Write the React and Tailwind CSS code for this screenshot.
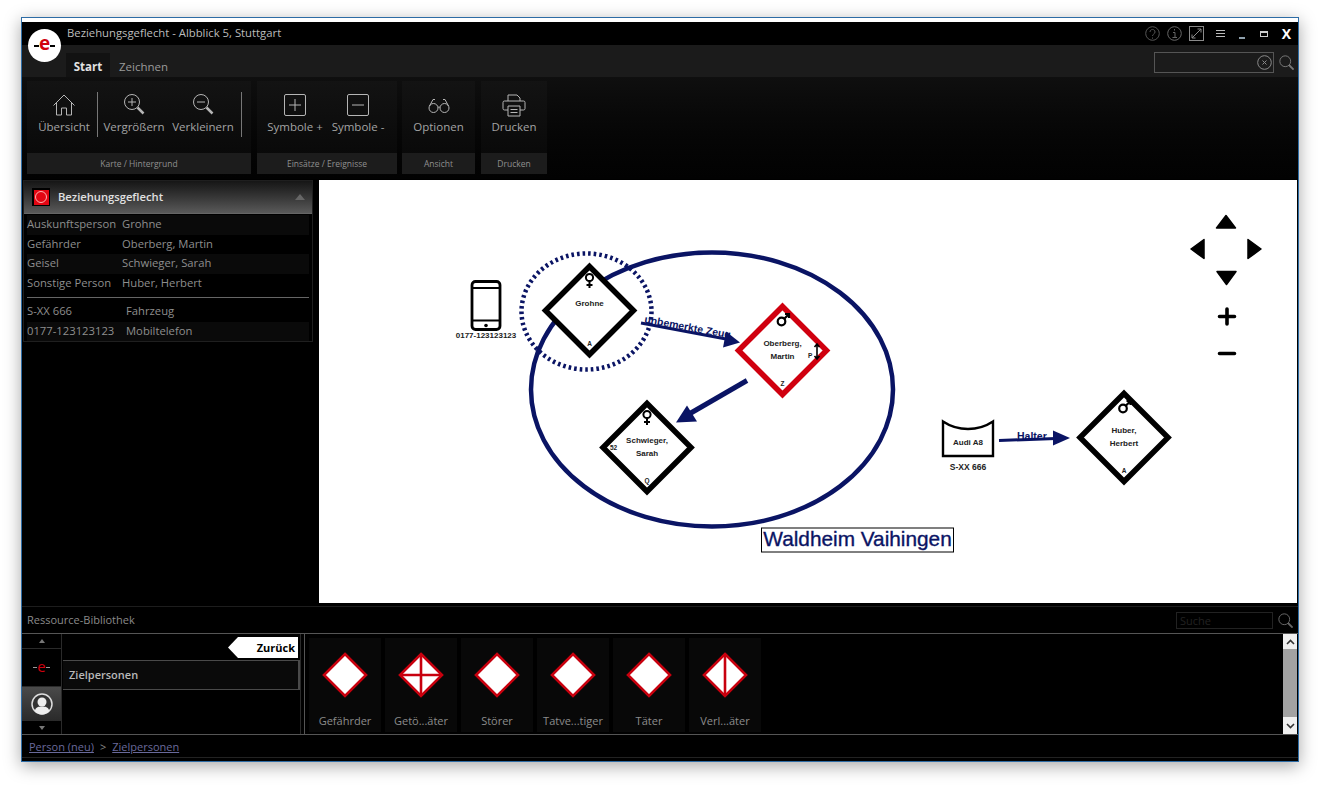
import React from 'react';

const NAVY = '#0a1464';

const treeRows = [
  ['Auskunftsperson', 'Grohne'],
  ['Gefährder', 'Oberberg, Martin'],
  ['Geisel', 'Schwieger, Sarah'],
  ['Sonstige Person', 'Huber, Herbert'],
];

const libraryItems = [
  { label: 'Gefährder', mark: null },
  { label: 'Getö...äter', mark: 'cross' },
  { label: 'Störer', mark: null },
  { label: 'Tatve...tiger', mark: null },
  { label: 'Täter', mark: null },
  { label: 'Verl...äter', mark: 'line' },
];

function Magnifier({ size = 18, color = '#777' }) {
  return (
    <svg width={size} height={size} viewBox="0 0 18 18" fill="none" stroke={color}>
      <circle cx="7.5" cy="7.5" r="6.5" strokeWidth="1.2" />
      <path d="M12 12l5.5 5.5" strokeWidth="2.2" />
    </svg>
  );
}

function RibbonIcon({ type }) {
  const c = '#b5b5b5';
  if (type === 'home') {
    return (
      <svg width="24" height="24" viewBox="0 0 24 24" fill="none" stroke={c} strokeWidth="1">
        <path d="M1.5 12.5L12 2l10.5 10.5M4.5 10v12h5v-7h5v7h5V10" />
      </svg>
    );
  }
  if (type === 'in' || type === 'out') {
    return (
      <svg width="24" height="24" viewBox="0 0 24 24" fill="none" stroke={c} strokeWidth="1">
        <circle cx="10" cy="9" r="7.5" />
        <path d="M6 9h8" />
        {type === 'in' && <path d="M10 5v8" />}
        <path d="M15.5 14.5l6 6" strokeWidth="2.5" />
      </svg>
    );
  }
  if (type === 'plus' || type === 'minus') {
    return (
      <svg width="24" height="24" viewBox="0 0 24 24" fill="none" stroke={c} strokeWidth="1">
        <rect x="1.5" y="1.5" width="21" height="21" rx="1.5" />
        <path d="M6 12h12" />
        {type === 'plus' && <path d="M12 6v12" />}
      </svg>
    );
  }
  if (type === 'glasses') {
    return (
      <svg width="24" height="24" viewBox="0 0 24 24" fill="none" stroke={c} strokeWidth="1">
        <circle cx="6.5" cy="15" r="4.5" />
        <circle cx="17.5" cy="15" r="4.5" />
        <path d="M11 14.5c.7-.6 1.3-.6 2 0M2.5 13L6 6.5h2M21.5 13L18 6.5h-2" />
      </svg>
    );
  }
  return (
    <svg width="24" height="24" viewBox="0 0 24 24" fill="none" stroke={c} strokeWidth="1">
      <path d="M6 8V2h9l3 3v3" />
      <path d="M6 17H2.5A1.5 1.5 0 011 15.5v-6A1.5 1.5 0 012.5 8h19A1.5 1.5 0 0123 9.5v6a1.5 1.5 0 01-1.5 1.5H18" />
      <path d="M6 13h12v10H6zM8.5 16.5h7M8.5 19.5h7" />
    </svg>
  );
}

function RibbonButton({ icon, label, width, className = '' }) {
  return (
    <div className={`flex flex-col items-center pt-[12px] ${className}`} style={{ width }}>
      <div className="h-[24px] flex items-center justify-center">
        <RibbonIcon type={icon} />
      </div>
      <div className="mt-[2px] text-[11.5px] leading-[16px] text-[#a4a4a4] whitespace-nowrap">{label}</div>
    </div>
  );
}

function RibbonGroup({ title, width, className = '', children }) {
  return (
    <div className={`h-[93px] flex flex-col bg-gradient-to-b from-[#131313] to-[#070707] ${className}`} style={{ width }}>
      <div className="flex-1 flex">{children}</div>
      <div className="h-[21px] bg-[#1c1c1c] text-[8.5px] leading-[21px] text-center text-[#8f8f8f]">{title}</div>
    </div>
  );
}

function Diamond({ x, y, color = '#000', lines, bottom, gender }) {
  const r = 44;
  return (
    <g>
      <path d={`M${x} ${y - r}L${x + r} ${y}L${x} ${y + r}L${x - r} ${y}Z`} fill="#fff" stroke={color} strokeWidth="5.5" />
      {gender === 'f' && (
        <g transform={`translate(${x} ${y - 33})`} fill="none" stroke="#000" strokeWidth="2">
          <circle cx="0" cy="0" r="3.6" />
          <path d="M0 3.5v7M-3 7.5h6" />
        </g>
      )}
      {gender === 'm' && (
        <g transform={`translate(${x - 1} ${y - 29})`} fill="none" stroke="#000" strokeWidth="2.2">
          <circle cx="0" cy="0" r="3.8" />
          <path d="M2.5 -2.5l4.5 -4.5M3.5 -7.5h4v4" />
        </g>
      )}
      {lines.map((line, i) => (
        <text
          key={line}
          x={x}
          y={y - 5 + i * 13}
          textAnchor="middle"
          fontSize="8"
          fontWeight="700"
          fontFamily="Liberation Sans, sans-serif"
          fill="#222"
        >
          {line}
        </text>
      ))}
      <text x={x} y={y + 35} textAnchor="middle" fontSize="6.5" fontWeight="700" fontFamily="Liberation Sans, sans-serif" fill="#222">
        {bottom}
      </text>
    </g>
  );
}

function Diagram() {
  const font = 'Liberation Sans, sans-serif';
  return (
    <svg className="block w-full h-full" viewBox="319 180 978 422">
      <ellipse cx="712" cy="389" rx="181" ry="137" fill="none" stroke={NAVY} strokeWidth="4.5" />

      {/* Telefon */}
      <rect x="472" y="281" width="28" height="48" rx="3.5" fill="#fff" stroke="#000" strokeWidth="2.8" />
      <path d="M472 287.5h28M472 320h28" stroke="#000" strokeWidth="1.8" />
      <circle cx="486" cy="325" r="1.8" fill="#000" />
      <text x="486" y="337" textAnchor="middle" fontSize="8" fontWeight="700" fontFamily={font} fill="#222">
        0177-123123123
      </text>

      <Diamond x={589.5} y={310} lines={['Grohne']} bottom="A" gender="f" />
      <ellipse cx="586.5" cy="311" rx="65" ry="58" fill="none" stroke={NAVY} strokeWidth="4.5" strokeDasharray="2.6 3" />
      <Diamond x={782.5} y={350} color="#d0000f" lines={['Oberberg,', 'Martin']} bottom="Z" gender="m" />
      <Diamond x={647} y={447} lines={['Schwieger,', 'Sarah']} bottom="Q" gender="f" />
      <Diamond x={1124} y={437} lines={['Huber,', 'Herbert']} bottom="A" gender="m" />

      {/* kleine Marker in den Rauten */}
      <text x="808" y="357" fontSize="6.5" fontWeight="700" fontFamily={font} fill="#222">P</text>
      <path d="M817 344v14M814.5 346.5l2.5-3 2.5 3M814.5 355.5l2.5 3 2.5-3" fill="none" stroke="#000" strokeWidth="1.6" />
      <text x="613.5" y="449" textAnchor="middle" fontSize="6.5" fontWeight="700" fontFamily={font} fill="#222">52</text>

      {/* Kanten */}
      <text x="644" y="322" transform="rotate(10.5 644 322)" fontSize="10.5" fontWeight="700" fontFamily={font} fill={NAVY}>
        unbemerkte Zeug
      </text>
      <path d="M641 322.5L726 338.5" stroke={NAVY} strokeWidth="3" />
      <path d="M740 342L723 347L726 331Z" fill={NAVY} />
      <path d="M747 380L690 413" stroke={NAVY} strokeWidth="5" />
      <path d="M676 422L687 405L697 421Z" fill={NAVY} />

      {/* Fahrzeug */}
      <path d="M943 421C958 431 978 431 993 421V455.5H943Z" fill="#fff" stroke="#000" strokeWidth="2.4" />
      <text x="968" y="444" textAnchor="middle" fontSize="8" fontWeight="700" fontFamily={font} fill="#222">Audi A8</text>
      <text x="968" y="469" textAnchor="middle" fontSize="8.5" fontWeight="700" fontFamily={font} fill="#222">S-XX 666</text>
      <text x="1017" y="439" fontSize="10.5" fontWeight="700" fontFamily={font} fill={NAVY}>Halter</text>
      <path d="M999 440L1056 438" stroke={NAVY} strokeWidth="3" />
      <path d="M1070 437.5L1053 445L1053 430Z" fill={NAVY} />

      {/* Beschriftung */}
      <rect x="761.5" y="527.5" width="192" height="24" fill="#fff" stroke="#000" />
      <text x="857.5" y="545" textAnchor="middle" fontSize="20.8" fontFamily={font} fill={NAVY} stroke={NAVY} strokeWidth="0.35">
        Waldheim Vaihingen
      </text>

      {/* Navigation */}
      <g fill="#000" stroke="#000" strokeWidth="1.5" strokeLinejoin="round">
        <path d="M1226 215L1235.5 227.5H1216.5Z" />
        <path d="M1191 248.5L1204 239V258Z" />
        <path d="M1261 248.5L1248 239V258Z" />
        <path d="M1226.5 284L1217 271H1236Z" />
      </g>
      <path d="M1219.5 316h15M1227 308.5v15M1219.5 353h15" stroke="#000" strokeWidth="3.6" strokeLinecap="round" />
    </svg>
  );
}

function TitleButtons() {
  return (
    <div className="ml-auto flex items-center h-full text-[#666]">
      <svg width="15" height="15" viewBox="0 0 15 15" fill="none" stroke="#555">
        <circle cx="7.5" cy="7.5" r="6.8" />
        <path d="M5 6c0-3.4 5-3.4 5 0 0 2-2.5 2-2.5 4M7.5 11.5v1.2" />
      </svg>
      <svg className="ml-[7px]" width="15" height="15" viewBox="0 0 15 15" fill="none" stroke="#666">
        <circle cx="7.5" cy="7.5" r="6.8" />
        <path d="M7.5 3v1.5M6 6.5h2v5M5.5 11.5h4.5" />
      </svg>
      <svg className="ml-[7px]" width="15" height="15" viewBox="0 0 15 15" fill="none" stroke="#8a8a8a">
        <rect x="0.5" y="0.5" width="14" height="14" />
        <path d="M3 12L12 3M8.5 3H12v3.5M3 8.5V12h3.5" />
      </svg>
      <div className="ml-[12px] w-[9px] h-[7px] border-y border-[#bbb] flex items-center">
        <div className="w-full h-px bg-[#bbb]" />
      </div>
      <div className="ml-[14px] mt-[9px] w-[6px] h-[2px] bg-[#8fa0ad]" />
      <div className="ml-[15px] w-[8px] h-[6px] border border-[#ccc] border-t-2" />
      <div className="ml-[14px] mr-[6px] text-[14px] font-bold text-white leading-none">X</div>
    </div>
  );
}

export default function App() {
  return (
    <div className="w-[1320px] h-[786px] bg-white pl-[21px] pt-[17px] font-['Open_Sans',sans-serif] overflow-hidden">
      <div className="relative w-[1278px] h-[745px] border border-[#2d6ca5] bg-black flex flex-col shadow-[0_4px_16px_rgba(0,0,0,0.35)]">
        <div className="h-[4px] bg-white shrink-0" />

        {/* Logo */}
        <div className="absolute left-[6px] top-[11px] w-[33px] h-[33px] rounded-full bg-white flex items-center justify-center z-10 text-black">
          <span className="w-[5px] h-[2px] bg-black" />
          <span className="text-[19px] leading-none font-bold text-[#d0000f] -mt-[4px]">e</span>
          <span className="w-[5px] h-[2px] bg-black" />
        </div>

        {/* Titelleiste */}
        <div className="h-[23px] shrink-0 flex items-center pl-[45px] pr-[1px]">
          <span className="text-[11.3px] text-[#bcbcbc]">Beziehungsgeflecht - Albblick 5, Stuttgart</span>
          <TitleButtons />
        </div>

        {/* Tabs */}
        <div className="h-[32px] shrink-0 bg-[#1b1b1b] flex items-end pl-[44px] pr-[4px] relative">
          <div className="w-[44px] h-[24px] bg-[#121212] text-center text-[11.5px] font-bold leading-[27px] text-[#e2e2e2]">Start</div>
          <div className="ml-[9px] h-[24px] text-[11.5px] leading-[27px] text-[#9a9a9a]">Zeichnen</div>
          <div className="ml-auto self-center flex items-center mt-[3px]">
            <div className="w-[120px] h-[21px] border border-[#555] flex items-center justify-end pr-[1px]">
              <svg width="15" height="15" viewBox="0 0 15 15" fill="none" stroke="#8a8a8a">
                <circle cx="7.5" cy="7.5" r="6.8" />
                <path d="M5.5 5.5l4 4M9.500 5.5l-4 4" />
              </svg>
            </div>
            <div className="ml-[5px]">
              <Magnifier size={15} color="#777" />
            </div>
          </div>
        </div>

        {/* Ribbon */}
        <div className="h-[102px] shrink-0 bg-gradient-to-b from-[#0f0f0f] to-[#020202] flex gap-[6px] pl-[5px] pt-[4px]">
          <RibbonGroup title="Karte / Hintergrund" width={224}>
            <RibbonButton icon="home" label="Übersicht" width={70} className="pl-[4px]" />
            <div className="w-px h-[45px] mt-[11px] bg-[#777]" />
            <RibbonButton icon="in" label="Vergrößern" width={72} />
            <RibbonButton icon="out" label="Verkleinern" width={66} />
            <div className="ml-[5px] w-px h-[45px] mt-[11px] bg-[#777]" />
          </RibbonGroup>
          <RibbonGroup title="Einsätze / Ereignisse" width={140}>
            <RibbonButton icon="plus" label="Symbole +" width={76} />
            <RibbonButton icon="minus" label="Symbole -" width={50} />
          </RibbonGroup>
          <RibbonGroup title="Ansicht" width={73} className="-ml-[1px]">
            <RibbonButton icon="glasses" label="Optionen" width={73} />
          </RibbonGroup>
          <RibbonGroup title="Drucken" width={66}>
            <RibbonButton icon="printer" label="Drucken" width={66} />
          </RibbonGroup>
        </div>

        {/* Hauptbereich */}
        <div className="h-[424px] shrink-0 flex pt-[1px]">
          <div className="w-[297px] shrink-0 pl-[1px] pr-[6px]">
            <div className="border border-[#1f1f1f] h-[162px]">
              <div className="h-[33px] flex items-center pl-[8px] bg-gradient-to-b from-[#161616] to-[#5a5a5a] border-b border-[#666]">
                <div className="w-[18px] h-[18px] bg-black flex items-center justify-center">
                  <div className="w-[15px] h-[15px] bg-[#e30613] flex items-center justify-center">
                    <div className="w-[12px] h-[12px] rounded-full border border-[#ffb0b0]" />
                  </div>
                </div>
                <span className="ml-[8px] text-[11.2px] font-semibold text-[#e0e0e0]">Beziehungsgeflecht</span>
                <div className="ml-auto mr-[7px] w-0 h-0 border-x-[5px] border-x-transparent border-b-[6px] border-b-[#666]" />
              </div>
              <div className="px-[3px] text-[11.25px] text-[#8e8e8e] mt-[1px]">
                {treeRows.map(([role, name], i) => (
                  <div key={role} className={`h-[19.5px] flex items-center ${i % 2 === 0 ? 'bg-[#0a0a0a]' : ''}`}>
                    <span className="w-[95px] whitespace-nowrap">{role}</span>
                    <span>{name}</span>
                  </div>
                ))}
                <div className="h-px bg-[#666] mt-[4px] mb-[4px]" />
                <div className="h-[19.5px] flex items-center">
                  <span className="w-[99px]">S-XX 666</span>
                  <span>Fahrzeug</span>
                </div>
                <div className="h-[19.5px] flex items-center bg-[#0a0a0a]">
                  <span className="w-[99px]">0177-123123123</span>
                  <span>Mobiltelefon</span>
                </div>
              </div>
            </div>
          </div>
          <div className="w-[978px] bg-white">
            <Diagram />
          </div>
        </div>

        {/* Ressource-Bibliothek */}
        <div className="h-[4px] shrink-0 border-b border-[#1d1d1d]" />
        <div className="h-[26px] shrink-0 flex items-center px-[5px]">
          <span className="text-[11px] text-[#8a8a8a]">Ressource-Bibliothek</span>
          <div className="ml-auto flex items-center">
            <div className="w-[97px] h-[17px] border border-[#222] pl-[3px] text-[11px] leading-[15px] text-[#222]">Suche</div>
            <div className="ml-[5px]">
              <Magnifier size={15} color="#666" />
            </div>
          </div>
        </div>
        <div className="h-[102px] shrink-0 border-y border-[#555] flex">
          <div className="w-[40px] shrink-0 border-r border-[#2a2a2a] flex flex-col">
            <div className="h-[14px] flex items-center justify-center">
              <div className="w-0 h-0 border-x-[3px] border-x-transparent border-b-[4px] border-b-[#777]" />
            </div>
            <div className="h-[39px] border-y border-[#2a2a2a] flex items-center justify-center text-[15px] leading-none text-[#d0000f]">
              <span className="w-[4px] h-px bg-[#999]" />
              <span className="-mt-[3px]">e</span>
              <span className="w-[4px] h-px bg-[#999]" />
            </div>
            <div className="h-[34px] bg-gradient-to-b from-[#4a4a4a] to-[#2a2a2a] flex items-center justify-center">
              <svg width="22" height="22" viewBox="0 0 22 22">
                <circle cx="11" cy="11" r="10" fill="#333" stroke="#ddd" strokeWidth="1.5" />
                <circle cx="11" cy="9" r="4.5" fill="#eee" />
                <path d="M3.5 18c1.5-4 4-4.5 7.5-4.5s6 .5 7.5 4.5a10 10 0 01-15 0Z" fill="#eee" />
              </svg>
            </div>
            <div className="flex-1 flex items-center justify-center">
              <div className="w-0 h-0 border-x-[3px] border-x-transparent border-t-[4px] border-t-[#777]" />
            </div>
          </div>
          <div className="w-[239px] shrink-0 border-r border-[#2a2a2a] flex flex-col">
            <div className="h-[26px] flex justify-end items-start pt-[3px] pr-[2px]">
              <div className="w-[70px] h-[21px] bg-white text-right pr-[3px] text-[11px] font-bold leading-[21px] text-black [clip-path:polygon(10px_0,100%_0,100%_100%,10px_100%,0_50%)]">
                Zurück
              </div>
            </div>
            <div className="h-[30px] ml-[1px] border-y border-r-2 border-[#4a4a4a] pl-[6px] flex items-center bg-[#0a0a0a] text-[11px] font-semibold text-[#b8b8b8]">
              Zielpersonen
            </div>
          </div>
          <div className="w-[3px] shrink-0" />
          <div className="flex-1 flex border-l border-[#555] pr-[1px]">
            <div className="flex-1 flex items-start gap-[4px] pl-[4px] pt-[4px]">
              {libraryItems.map((item) => (
                <div key={item.label} className="w-[72px] h-[94px] bg-[#080808] flex flex-col items-center pt-[13px]">
                  <svg width="48" height="48" viewBox="0 0 48 48">
                    <path d="M24 3L45 24L24 45L3 24Z" fill="#fff" stroke="#c8000e" strokeWidth="2.6" />
                    {item.mark === 'cross' && <path d="M24 3V45M3 24H45" stroke="#c8000e" strokeWidth="2.6" />}
                    {item.mark === 'line' && <path d="M24 3V45" stroke="#c8000e" strokeWidth="2.6" />}
                  </svg>
                  <div className="mt-[14px] text-[11px] leading-[16px] text-[#8c8c8c] whitespace-nowrap">{item.label}</div>
                </div>
              ))}
            </div>
            <div className="w-[14px] shrink-0 flex flex-col bg-[#a2a2a2]">
              <div className="h-[15px] bg-[#f0f0f0] flex items-center justify-center">
                <svg width="9" height="6" viewBox="0 0 9 6" fill="none" stroke="#333" strokeWidth="1.6"><path d="M1 5l3.5-3.5L8 5" /></svg>
              </div>
              <div className="flex-1" />
              <div className="h-[17px] bg-[#f0f0f0] flex items-center justify-center">
                <svg width="9" height="6" viewBox="0 0 9 6" fill="none" stroke="#333" strokeWidth="1.6"><path d="M1 1l3.5 3.5L8 1" /></svg>
              </div>
            </div>
          </div>
        </div>

        {/* Breadcrumb */}
        <div className="flex-1 mb-[3px] pt-[3px] border-b border-[#222] flex items-center pl-[7px] text-[11px] text-[#6a6a9c]">
          <span className="underline">Person (neu)</span>
          <span className="mx-[6px] text-[#888]">&gt;</span>
          <span className="underline">Zielpersonen</span>
        </div>
      </div>
    </div>
  );
}
